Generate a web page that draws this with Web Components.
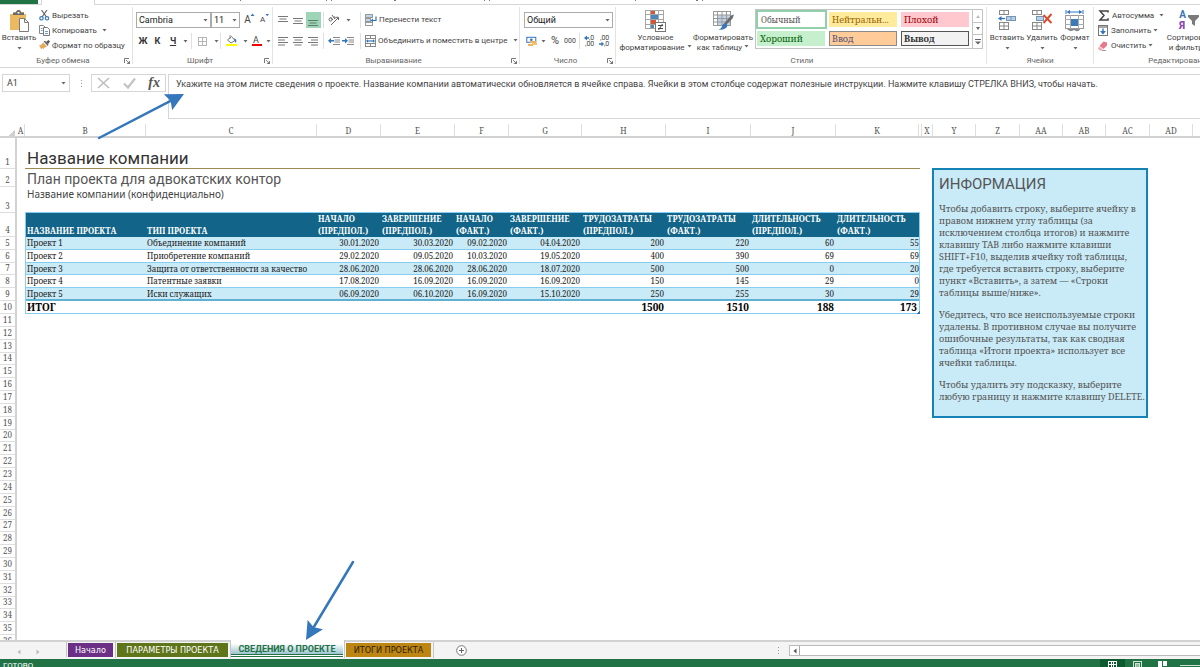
<!DOCTYPE html>
<html lang="ru">
<head>
<meta charset="utf-8">
<title>План проекта — сведения о проекте</title>
<style>
  html, body { margin: 0; height: 100%; overflow: hidden; background: #fff; }
  body {
    --ui: Roboto, "Open Sans", sans-serif;
    --book: "Noto Serif", "DejaVu Serif Condensed", serif;
    --line: #d6d6d6;
    font: 8px/10px var(--ui);
    color: #444;
  }
</style>
</head>
<body>
<xl-app></xl-app>

<script>
const rect = (x, y, w, h, f, s) => `<rect x="${x}" y="${y}" width="${w}" height="${h}" fill="${f || 'none'}"${s ? ` stroke="${s}"` : ''}/>`;
const line = (d, c, w) => `<path d="${d}" fill="none" stroke="${c || '#777'}" stroke-width="${w || 1}"/>`;
const fill = (d, c) => `<path d="${d}" fill="${c || '#666'}"/>`;

/* name: [width, height, drawing] */
const ICONS = {
  caret: [5, 3, fill('M.5 0h4L2.500 2.500z', '#666')],
  paste: [20, 22, fill('M1 4h4V2h3a2 2 0 0 1 4 0h3v2h2v5h-6v11H1z', '#eab960') + fill('M4 5V2.500h3a2 2 0 0 1 5 0h3V5z', '#6a6a6a') + fill('M8.500 2h2v1.500h-2z', '#fff') + '<path d="M10.500 8.500h5l4 4v9h-9z" fill="#fff" stroke="#7b7b7b"/><path d="M15.500 8.500v4h4" fill="none" stroke="#7b7b7b"/>'],
  cut: [11, 11, line('M2.500 0L7.500 7M8 0L3 7', '#666', 1.2) + '<circle cx="2.500" cy="8.300" r="1.700" fill="none" stroke="#3d7ab5" stroke-width="1.200"/><circle cx="8" cy="8.300" r="1.700" fill="none" stroke="#3d7ab5" stroke-width="1.200"/>'],
  copy: [11, 11, '<path d="M.5.5h4l2 2v6h-6z" fill="#fff" stroke="#888"/><path d="M4.500 2.500h4l2 2v6h-6z" fill="#fff" stroke="#777"/>' + line('M6 6.500h3M6 8.500h3M2 3.500h1.500M2 5.500h1.500', '#4a86bd', .8)],
  brush: [11, 11, fill('M7 2l2.500-2L11 1.500 9 4z', '#555') + fill('M4.500 1.500L6 .8 9.500 4.500 8.800 6z', '#666') + fill('M4 2.500L8 6.500C6 7 5 8 4.500 9L3 8 2.500 9.500 0 5.500 2 5z', '#e8a85a')],
  launch: [6, 6, line('M.5 5V.5H5', '#777') + line('M2 2l2.500 2.500', '#777', .9) + fill('M6 2.500V6H2.500z', '#777')],
  grow: [11, 11, fill('M6.500 3l2-2.500L10.500 3z', '#3a76b8')],
  shrink: [11, 11, fill('M6.500 1H10L8.200 3.200z', '#3a76b8')],
  borders: [9, 9, rect(.5, .5, 8, 8, '', '#b5b5b5') + line('M4.500 0v9M0 4.500h9', '#b5b5b5')],
  bucket: [11, 12, '<path d="M1.500 5L5.500 1.500 9 5.500 5 8z" fill="#fff" stroke="#777"/>' + line('M4 0v4', '#777', .8) + fill('M8 3.500c2 0 3 1.500 2 4.500L8.500 6z', '#3a76b8') + rect(0, 9, 11, 2, '#ffff00')],
  fontcolor: [10, 12, rect(0, 9, 10, 2, '#f30000')],
  top: [11, 13, line('M0 2.500h10M1.500 5h7M0 7.500h10')],
  middle: [11, 13, line('M0 4.500h10M1.500 7h7M0 9.500h10')],
  bottom: [11, 13, line('M0 6.500h10M1.500 9h7M0 11.500h10', '#5b7d6a')],
  left: [11, 9, line('M0 .5h10M0 3h7M0 5.500h10M0 8h7')],
  center: [11, 9, line('M0 .5h10M1.500 3h7M0 5.500h10M1.500 8h7')],
  right: [11, 9, line('M0 .5h10M3 3h7M0 5.500h10M3 8h7')],
  orient: [12, 12, line('M3 11L10.500 3.500M10.500 6V3.300H8', '#666') + '<circle cx="2.500" cy="5.500" r="1.500" fill="none" stroke="#666"/>' + line('M2.500 3L5 6M4 1l3 4M5.500 3.500c1-1.500 2.500-.5 1.500 1', '#666')],
  outdent: [12, 8, line('M5 .5h7M6.500 3h5.500M6.500 5h5.500M5 7.500h7', '#888') + fill('M0 3.700L3 1v2h3v1.500H3v2z', '#2f75bd')],
  indent: [12, 8, line('M5 .5h7M6.500 3h5.500M6.500 5h5.500M5 7.500h7', '#888') + fill('M6 3.700L3 1v2H0v1.500h3v2z', '#2f75bd')],
  wrap: [12, 12, rect(.5, .5, 7, 3, '#bcd6ee', '#999') + rect(.5, 4.500, 5, 3, '#bcd6ee', '#999') + rect(.5, 8.500, 7, 3, '#fff', '#999') + line('M11 2.500v4H7.500', '#2f75bd', 1.2) + fill('M5.500 6.500L8 4.500v4z', '#2f75bd')],
  merge: [11, 12, rect(.5, .5, 10, 11, '#fff', '#888') + line('M0 3.500h11M0 8.500h11M5.500 0v3M5.500 9v3', '#888') + line('M2.500 6h6', '#2f75bd', 1.2) + fill('M1 6l2-1.800v3.600zM10 6L8 4.200v3.600z', '#2f75bd')],
  money: [11, 11, rect(.8, 1.300, 9, 5, '#fff', '#2f75bd') + '<circle cx="5.300" cy="3.800" r="1.300" fill="#2f75bd"/>' + rect(4, 5, 6, 2, '#eeb45c') + rect(2, 8, 5, 2, '#eeb45c') + rect(6, 7, 5, 2, '#f0c27c')],
  incdec: [12, 12, fill('M0 3l3-2.500v1.700h2v1.500H3V5.500z', '#2f75bd')],
  decdec: [12, 12, fill('M5 9L2.500 6.500v1.700H0v1.500h2.500V11.500z', '#2f75bd')],
  cond: [21, 22, rect(.5, .5, 18, 18, '#fff', '#a5a5a5') + line('M0 4.500h19M0 9.500h19M0 14.500h19M5.500 0v19M13.500 0v19', '#a5a5a5') + rect(6, 1, 4, 3, '#d9532f') + rect(6, 5, 7, 4, '#4a86bd') + rect(6, 10, 5, 4, '#d9532f') + rect(6, 15, 3, 3, '#4a86bd') + rect(10.500, 12.500, 10, 9, '#fff', '#777') + line('M13 15.500h5M13 18.500h5M17.500 14l-4 6', '#444')],
  fmttable: [21, 22, rect(.5, 1.500, 17, 14, '#fff', '#999') + rect(5, 5, 12, 10, '#bed3e8') + line('M0 5h18M0 8.500h18M0 12h18M4.500 1v15M9 1v15M13.500 1v15', '#999') + fill('M18 5.500l3-1-1.500 4L13 15l-2-1.500z', '#6b6b6b') + fill('M12.500 13.500c2 .5 2.500 2.500 1 4S9 20.500 5.500 19.500c3-.5 3-2.500 4-4.500 1-1.500 2-1.700 3-1.500z', '#3a78b5')],
  insert: [18, 20, rect(1.500, .5, 9, 4, '#fff', '#888') + line('M6 0v5', '#888') + rect(8.500, 6.500, 9, 4, '#b5d0ea', '#7794b0') + line('M13 6v5', '#7794b0') + rect(1.500, 12.500, 9, 7, '#fff', '#888') + line('M6 12v8M1 16h10', '#888') + line('M3 8.500h4', '#2f75bd', 1.3) + fill('M0 8.500L3.500 6v5z', '#2f75bd')],
  remove: [20, 20, rect(.5, .5, 9, 4, '#fff', '#888') + line('M5 0v5', '#888') + rect(4.500, 6.500, 7, 4, '#b5d0ea', '#7794b0') + rect(.5, 12.500, 9, 7, '#fff', '#888') + line('M5 12v8M0 16h10', '#888') + line('M11.500 5l8 8M19.500 4l-8 9', '#dc4b2b', 2)],
  format: [20, 22, line('M1 0v4M18 0v4M3 2h13', '#2f75bd') + fill('M1.500 2L5 0v4zM17.500 2L14 0v4z', '#2f75bd') + rect(.5, 5.500, 18, 13, '#fff', '#999') + line('M0 9.500h19M0 14.500h19M5.500 5v14M13.500 5v14', '#aaa') + rect(6, 9, 7, 7, '#3d7ab5') + fill('M2 19c3 3 5 2 7 1l2 1c2 1 4-1 4-2', '#888')],
  sum: [12, 11, line('M10 2.500V1H2l4 4.500L2 10h8V8.300', '#444', 1.5)],
  filldown: [11, 11, rect(.5, .5, 9, 10, '#fff', '#777') + rect(1, 1, 8, 2, '#a8a8a8') + line('M5 3.500v5', '#2f75bd', 1.4) + fill('M2 6h6L5 9.500z', '#2f75bd')],
  eraser: [11, 10, fill('M5.500.5L9 1.500v3L5.500 8 1.500 5z', '#e8798d') + fill('M1 5.500L5 8.500 3.500 9.500H1.500L0 7.500z', '#f1a9b5') + line('M4 9.500h4', '#999')],
  funnel: [20, 19, fill('M9 5h11v2l-4 4v5l-3-2v-3L9 7z', '#7a7a7a')],
  cancel: [13, 12, line('M1 1l11 10M12 1L1 11', '#bdbdbd', 1.6)],
  enter: [13, 12, line('M1 6.500l4 4L12 1.500', '#c2c2c2', 2.2)],
  dots: [3, 9, rect(1, 1, 1, 1, '#999') + rect(1, 4, 1, 1, '#999') + rect(1, 7, 1, 1, '#999')],
  prev: [4, 6, fill('M3.500.5v5L.5 3z', '#bbb')],
  next: [4, 6, fill('M.5.5v5L3.500 3z', '#bbb')],
  plus: [11, 11, '<circle cx="5.500" cy="5.500" r="4.800" fill="#fff" stroke="#777"/>' + line('M5.500 3v5M3 5.500h5', '#666')],
  scrollleft: [4, 6, fill('M3.500.5v5L.5 3z', '#555')],
  up: [4, 3, fill('M0 3h4L2 0z', '#bbb')],
  down: [4, 3, fill('M0 0h4L2 3z', '#666')],
  more: [6, 6, line('M0 .5h6', '#666') + fill('M0 2.500h6L3 5.500z', '#666')],
  gridview: [9, 7, rect(.5, .5, 8, 8, '', '#fff') + line('M3.500 0v7M5.500 0v7M0 3.500h9', '#fff')],
  pageview: [9, 7, rect(.5, .5, 8, 8, '', '#cfe3d6') + rect(2.500, 2.500, 4, 6, '#8fbda0', '#cfe3d6')],
  breakview: [9, 7, rect(0, 0, 4, 7, '#fff') + rect(5, 0, 4, 5, '#fff')]
};

const define = (name, css, html, after) => {
  const t = document.createElement('template');
  t.innerHTML = `<style>*{box-sizing:border-box}${css}</style>${html}`;
  customElements.define(name, class extends HTMLElement {
    constructor() {
      super();
      this.attachShadow({ mode: 'open' }).append(t.content.cloneNode(true));
    }
    connectedCallback() {
      if (after && !this.ready) { this.ready = true; after(this, this.shadowRoot); }
    }
  });
};

define('xl-icon', ':host{display:block;flex:none}svg{display:block;overflow:hidden}', '<svg aria-hidden="true"></svg>', (el, root) => {
  const [w, h, d] = ICONS[el.getAttribute('name')];
  const svg = root.querySelector('svg');
  svg.setAttribute('width', w);
  svg.setAttribute('height', h);
  svg.innerHTML = d;
});

/* Ribbon group: commands above, caption and launcher below */
define('rb-group', `
  :host{display:flex;flex-direction:column;flex:none;position:relative}
  :host::after{content:"";position:absolute;right:0;top:2px;bottom:3px;width:1px;background:#e3e3e3}
  .body{display:flex;flex:none;height:49px;padding-top:2px}
  footer{display:flex;flex:none;height:13px;align-items:center;color:#666;padding-right:3px}
  span{flex:1;text-align:center;white-space:nowrap}
`, '<div class="body"><slot></slot></div><footer><span></span></footer>', (el, root) => {
  root.querySelector('span').textContent = el.getAttribute('caption');
  if (el.hasAttribute('launcher')) root.querySelector('footer').insertAdjacentHTML('beforeend', '<xl-icon name="launch"></xl-icon>');
});

/* Command: kind = large | small (icon + words) | tool (icon or glyph only) */
define('rb-button', `
  :host{display:block;flex:none}
  button{all:unset;box-sizing:border-box;display:flex;align-items:center;justify-content:center;width:100%;height:100%;white-space:nowrap;gap:2px}
  :host([kind=small]) button{justify-content:flex-start;height:15px}
  :host([kind=small]) .caret{margin-left:3px}
  :host([tight]) .caret{margin-left:0!important}
  :host([kind=large]) button{flex-direction:column;justify-content:flex-start;gap:0}
  :host([kind=large]) .pic{height:26px;padding-top:3px}
  :host([kind=large]) .txt{text-align:center}
  :host([kind=large]) .caret{margin-top:4px}
  .caret.inline{display:inline-block;margin:0 0 2px 2px!important}
  :host([active]) button{background:#9fd5b7}
`, '<button type="button"></button>', (el, root) => {
  const b = root.querySelector('button');
  const icon = el.getAttribute('icon'), label = el.getAttribute('label');
  const large = el.getAttribute('kind') === 'large';
  if (icon) b.insertAdjacentHTML('beforeend', `<span class="pic"><xl-icon name="${icon}"></xl-icon></span>`);
  const words = label ? label.split('|') : [];
  if (words.length) b.insertAdjacentHTML('beforeend', `<span class="txt">${words.join('<br>')}</span>`);
  b.insertAdjacentHTML('beforeend', '<slot></slot>');
  if (el.hasAttribute('drop')) {
    if (large && words.length > 1) b.querySelector('.txt').insertAdjacentHTML('beforeend', '<xl-icon class="caret inline" name="caret"></xl-icon>');
    else b.insertAdjacentHTML('beforeend', '<xl-icon class="caret" name="caret"></xl-icon>');
  }
  if (el.title) b.setAttribute('aria-label', el.title);
});

define('rb-select', `
  :host{display:flex;align-items:center;position:relative;border:1px solid #ababab;height:16px;background:#fff}
  select{all:unset;box-sizing:border-box;flex:1;min-width:0;height:100%;padding-left:2px;font:9px/14px var(--ui);color:#222;white-space:nowrap}
  xl-icon{position:absolute;right:2px;top:6px;pointer-events:none}
`, '<select></select><xl-icon name="caret"></xl-icon>', (el, root) => {
  const s = root.querySelector('select');
  s.setAttribute('aria-label', el.getAttribute('label'));
  s.add(new Option(el.getAttribute('value')));
});

define('xl-tabs', `
  :host{display:flex;height:5px;border-bottom:1px solid var(--line);background:#fff}
  .file{width:38px;height:4px;background:#217346}
  .home{width:54px;height:5px;margin-left:3px;border:1px solid var(--line);border-width:0 1px;background:#fff}
  svg{display:block}
`, `<div class="file"></div><div class="home"></div>
  <svg width="640" height="2" aria-hidden="true"><path d="M145 0h1v1h-1zM231 0h1v1h-1zM236 0h1v1h-1zM299 0h2v1h-2zM389 0h1v1h-1zM394 0h1v1h-1zM540 0h1v1h-1zM601 0h2v1h-2zM607 0h1v1h-1z" fill="#777"/></svg>`);

define('xl-gallery', `
  :host{display:flex;border:1px solid #c3c3c3;height:40px;background:#fff}
  .cells{display:grid;grid-template-columns:72px 72px 72px;grid-template-rows:19px 19px}
  button{all:unset;box-sizing:border-box;margin:2px 3px 2px 1px;padding-left:3px;font:9px/15px var(--book);white-space:nowrap;overflow:hidden;border:0 solid transparent}
  .normal{font-size:8px;margin:0 1px 0 0;border:2px solid #92cfad;color:#555}
  .neutral{background:#ffeb9c;color:#9c6500}
  .bad{background:#ffc7ce;color:#9c0006}
  .good{background:#c6efce;color:#006100}
  .input{background:#ffcc99;color:#4f4f76;border:1px solid #8a8a8a;line-height:13px;padding-left:2px}
  .output{background:#f2f2f2;color:#333;border:1px solid #555;line-height:13px;padding-left:2px;font-weight:bold}
  .scroll{display:grid;grid-template-rows:13px 12px 13px;width:10px;border-left:1px solid #c3c3c3}
  .scroll button{margin:0;padding:0;display:grid;place-items:center;border-bottom:1px solid #c3c3c3}
  .scroll button:last-child{border-bottom:0}
`, `<div class="cells">
    <button class="normal">Обычный</button><button class="neutral">Нейтральн...</button><button class="bad">Плохой</button>
    <button class="good">Хороший</button><button class="input">Ввод</button><button class="output">Вывод</button>
  </div>
  <div class="scroll">
    <button aria-label="Вверх"><xl-icon name="up"></xl-icon></button>
    <button aria-label="Вниз"><xl-icon name="down"></xl-icon></button>
    <button aria-label="Дополнительно"><xl-icon name="more"></xl-icon></button>
  </div>`);

define('xl-ribbon', `
  :host{display:flex;height:63px;overflow:hidden;border-bottom:1px solid var(--line);background:#fff}
  .stack{display:flex;flex-direction:column;padding-top:1px}
  .rows{display:grid;grid-template-rows:16px 16px;row-gap:5px;padding-top:5px;align-content:start}
  .row{display:flex;align-items:stretch}
  hr{border:0;width:1px;margin:0;background:#e0e0e0}
  .glyph{font:bold 9px/12px var(--ui);color:#333}
  .over{position:absolute;font:9px/9px var(--ui);color:#444}
  .digits{left:5px;top:2px;font:7px/6px var(--ui);text-align:right}
  .digits.near{left:0}
  .sort{left:15px;top:2px;font:bold 10px/11px var(--ui);color:#3a76b8}
  .sort b{color:#8b4bb0}
  .w8{width:8px}.w10{width:10px}.w14{width:14px}.w15{width:15px}.w16{width:16px}.w20{width:20px}
  .gap2{margin-left:2px}.gap3{margin-left:3px}
  .wide{margin:0 4px 0 8px}
  .clip{width:133px;padding-left:2px}.font{width:140px;padding-left:3px}.align{width:247px;padding-left:3px}
  .num{width:96px;padding-left:4px}.styles{width:371px;padding-left:4px}.cells{width:107px;padding-left:2px}.edit{width:170px;padding-left:4px}
  .rel{position:relative}
`, `
<rb-group class="clip" caption="Буфер обмена" launcher>
  <rb-button kind="large" icon="paste" label="Вставить" drop style="width:34px"></rb-button>
  <div class="stack gap3">
    <rb-button kind="small" icon="cut" label="Вырезать"></rb-button>
    <rb-button kind="small" icon="copy" label="Копировать" drop></rb-button>
    <rb-button kind="small" icon="brush" label="Формат по образцу"></rb-button>
  </div>
</rb-group>
<rb-group class="font" caption="Шрифт" launcher>
  <div class="rows">
    <div class="row">
      <rb-select label="Шрифт" value="Cambria" style="width:75px"></rb-select>
      <rb-select label="Размер" value="11" style="width:29px"></rb-select>
      <rb-button class="w15 rel" title="Увеличить размер"><span style="font-size:10px">A</span><xl-icon name="grow" class="over" style="right:0;top:1px"></xl-icon></rb-button>
      <rb-button class="w15 rel" title="Уменьшить размер"><span>A</span><xl-icon name="shrink" class="over" style="right:0;top:1px"></xl-icon></rb-button>
    </div>
    <div class="row">
      <rb-button class="w14"><span class="glyph">Ж</span></rb-button>
      <rb-button class="w15"><i class="glyph">К</i></rb-button>
      <rb-button class="w16"><u class="glyph">Ч</u></rb-button>
      <rb-button class="w8" icon="caret" title="Подчёркивание"></rb-button>
      <hr class="gap2">
      <rb-button class="w20" icon="borders" title="Границы"></rb-button>
      <rb-button class="w8" icon="caret" title="Виды границ"></rb-button>
      <hr>
      <rb-button class="w20" icon="bucket" title="Цвет заливки"></rb-button>
      <rb-button class="w8" icon="caret" title="Выбор заливки"></rb-button>
      <rb-button class="w15 rel" icon="fontcolor" title="Цвет текста"><span class="over" style="left:4px;top:3px">A</span></rb-button>
      <rb-button class="w8" icon="caret" title="Выбор цвета"></rb-button>
    </div>
  </div>
</rb-group>
<rb-group class="align" caption="Выравнивание" launcher>
  <div class="rows">
    <div class="row">
      <rb-button class="w15" icon="top" title="По верхнему краю"></rb-button>
      <rb-button class="w15" icon="middle" title="Посередине"></rb-button>
      <rb-button class="w15" icon="bottom" active title="По нижнему краю"></rb-button>
      <hr class="gap2">
      <rb-button class="w20" icon="orient" title="Ориентация"></rb-button>
      <rb-button class="w8" icon="caret" title="Виды ориентации"></rb-button>
      <hr class="wide">
      <rb-button kind="small" icon="wrap" label="Перенести текст"></rb-button>
    </div>
    <div class="row">
      <rb-button class="w15" icon="left" title="По левому краю"></rb-button>
      <rb-button class="w15" icon="center" title="По центру"></rb-button>
      <rb-button class="w15" icon="right" title="По правому краю"></rb-button>
      <hr class="gap2">
      <rb-button class="w20" icon="outdent" title="Уменьшить отступ"></rb-button>
      <rb-button class="w8" icon="indent" title="Увеличить отступ"></rb-button>
      <hr class="wide">
      <rb-button kind="small" icon="merge" label="Объединить и поместить в центре" drop></rb-button>
    </div>
  </div>
</rb-group>
<rb-group class="num" caption="Число" launcher>
  <div class="rows">
    <div class="row"><rb-select label="Числовой формат" value="Общий" style="width:89px"></rb-select></div>
    <div class="row">
      <rb-button class="w15" icon="money" title="Финансовый формат"></rb-button>
      <rb-button class="w8" icon="caret" title="Виды валют"></rb-button>
      <rb-button class="w16"><span style="font-size:11px">%</span></rb-button>
      <rb-button class="w14"><span style="font-size:7px">000</span></rb-button>
      <hr class="gap2">
      <rb-button class="w20 rel" icon="incdec" title="Увеличить разрядность"><span class="over digits">,0<br>,00</span></rb-button>
      <rb-button class="w10 rel" icon="decdec" title="Уменьшить разрядность"><span class="over digits near">,00<br>,0</span></rb-button>
    </div>
  </div>
</rb-group>
<rb-group class="styles" caption="Стили">
  <rb-button kind="large" icon="cond" label="Условное|форматирование" drop style="width:71px"></rb-button>
  <rb-button kind="large" icon="fmttable" label="Форматировать|как таблицу" drop style="width:64px"></rb-button>
  <xl-gallery style="margin-top:2px"></xl-gallery>
</rb-group>
<rb-group class="cells" caption="Ячейки">
  <rb-button kind="large" icon="insert" label="Вставить" drop style="width:36px"></rb-button>
  <rb-button kind="large" icon="remove" label="Удалить" drop style="width:34px"></rb-button>
  <rb-button kind="large" icon="format" label="Формат" drop style="width:32px"></rb-button>
</rb-group>
<rb-group class="edit" caption="Редактирование">
  <div class="stack">
    <rb-button kind="small" icon="sum" label="Автосумма" drop></rb-button>
    <rb-button kind="small" icon="filldown" label="Заполнить" drop tight></rb-button>
    <rb-button kind="small" icon="eraser" label="Очистить" drop tight></rb-button>
  </div>
  <rb-button class="rel" kind="large" icon="funnel" label="Сортировка|и фильтр" drop style="width:50px"><span class="over sort">А<br><b>Я</b></span></rb-button>
</rb-group>
`);

define('xl-formula', `
  :host{display:flex;align-items:flex-start;padding:6px 0 6px 2px;height:56px;color:#444}
  .name{width:68px;flex:none;display:flex;align-items:center;border:1px solid var(--line);height:18px;padding:0 3px 0 4px}
  input{all:unset;flex:1;min-width:0;font:9px/16px var(--ui)}
  .dots{padding:5px 8px 0 10px}
  .keys{width:75px;flex:none;display:flex;align-items:center;justify-content:space-between;border:1px solid var(--line);height:18px;padding:0 5px}
  .keys button{all:unset}
  .keys .fx{font:italic bold 14px/16px "Liberation Serif",serif;color:#555}
  textarea{all:unset;box-sizing:border-box;flex:1;min-width:0;height:45px;margin-left:2px;border:1px solid var(--line);border-right:0;padding:1px 0 0 7px;font:9px/16px var(--ui);white-space:nowrap;overflow:hidden}
`, `<div class="name"><input aria-label="Имя ячейки" value="A1"><xl-icon name="caret"></xl-icon></div>
  <div class="dots"><xl-icon name="dots"></xl-icon></div>
  <div class="keys"><button aria-label="Отмена"><xl-icon name="cancel"></xl-icon></button><button aria-label="Ввод"><xl-icon name="enter"></xl-icon></button><button class="fx">fx</button></div>
  <textarea aria-label="Строка формул">Укажите на этом листе сведения о проекте. Название компании автоматически обновляется в ячейке справа. Ячейки в этом столбце содержат полезные инструкции. Нажмите клавишу СТРЕЛКА ВНИЗ, чтобы начать.</textarea>`);

define('xl-columns', `
  :host{display:grid;grid-template-columns:17px 8px 121px 171px 64px 74px 54px 73px 84px 85px 85px 83px 3px 11px 43px 44px 43px 43px 44px 43px 1fr;height:14px;border-bottom:2px solid #d2d2d2;font:8px/14px var(--book);color:#555;overflow:hidden}
  span{border-right:1px solid #dedede;text-align:center;white-space:nowrap}
  span:nth-child(2){border:0}
  span:last-child{border:0}
  .corner{display:flex;align-items:flex-end;justify-content:flex-end;padding:0 2px 2px 0}
  i{width:7px;height:7px;background:linear-gradient(135deg,transparent 50%,#d0d0d0 50%)}
`, '', (el, root) => {
  root.append(Object.assign(document.createElement('span'), { className: 'corner', innerHTML: '<i></i>' }));
  for (const c of ['A', 'B', 'C', 'D', 'E', 'F', 'G', 'H', 'I', 'J', 'K', '', 'X', 'Y', 'Z', 'AA', 'AB', 'AC', 'AD', ''])
    root.append(Object.assign(document.createElement('span'), { textContent: c }));
});

define('xl-gutter', `
  :host{display:block;border-right:2px solid #d2d2d2;font:8px/10px var(--book);color:#555;text-align:center}
  .head{display:grid;grid-template-rows:31px 18px 26px 24px 13px 13px 12px 13px 13px 13px}
  .rest{display:grid;grid-auto-rows:1fr;height:334px}
  span{display:flex;align-items:flex-end;justify-content:center;border-bottom:1px solid #dedede;padding-bottom:1px}
`, '<div class="head"></div><div class="rest"></div>', (el, root) => {
  for (let n = 1; n <= 36; n++)
    root.querySelector(n > 10 ? '.rest' : '.head').append(Object.assign(document.createElement('span'), { textContent: n }));
});

const PROJECTS = [
  ['Проект 1', 'Объединение компаний', '30.01.2020', '30.03.2020', '09.02.2020', '04.04.2020', 200, 220, 60, 55],
  ['Проект 2', 'Приобретение компаний', '29.02.2020', '09.05.2020', '10.03.2020', '19.05.2020', 400, 390, 69, 69],
  ['Проект 3', 'Защита от ответственности за качество', '28.06.2020', '28.06.2020', '28.06.2020', '18.07.2020', 500, 500, 0, 20],
  ['Проект 4', 'Патентные заявки', '17.08.2020', '16.09.2020', '16.09.2020', '16.09.2020', 150, 145, 29, 0],
  ['Проект 5', 'Иски служащих', '06.09.2020', '06.10.2020', '16.09.2020', '15.10.2020', 250, 255, 30, 29]
];
const HEADS = ['НАЗВАНИЕ ПРОЕКТА', 'ТИП ПРОЕКТА', 'НАЧАЛО|(ПРЕДПОЛ.)', 'ЗАВЕРШЕНИЕ|(ПРЕДПОЛ.)', 'НАЧАЛО|(ФАКТ.)', 'ЗАВЕРШЕНИЕ|(ФАКТ.)', 'ТРУДОЗАТРАТЫ|(ПРЕДПОЛ.)', 'ТРУДОЗАТРАТЫ|(ФАКТ.)', 'ДЛИТЕЛЬНОСТЬ|(ПРЕДПОЛ.)', 'ДЛИТЕЛЬНОСТЬ|(ФАКТ.)'];

define('project-table', `
  :host{display:block;position:relative;width:895px}
  table{table-layout:fixed;width:100%;border-collapse:separate;border-spacing:0;border:1px solid #86cdef;border-top:0;border-bottom:0;font:8px/11px var(--book);color:#222}
  th,td{padding:0 2px 0 1px;text-align:right;white-space:nowrap;vertical-align:bottom}
  td:last-child{padding-right:0}
  th{height:25px;background:#126488;color:#fff;text-align:left;line-height:12px;border-top:1px solid #86cdef}
  td{height:13px;line-height:12px;border-bottom:1px solid #86cdef}
  td:nth-child(-n+2){text-align:left}
  tbody tr:nth-child(odd) td{background:#c9eaf7}
  tbody tr:nth-child(3) td{height:12px;line-height:11px}
  tbody tr:last-child td{border-bottom:2px solid #5fb0d3;line-height:11px}
  tfoot td{font-size:10px;font-weight:bold;color:#000}
  tfoot td:last-child{padding-right:2px}
  i{position:absolute;right:0;bottom:0;width:3px;height:3px;background:linear-gradient(135deg,transparent 40%,#2f6fb5 40%)}
`, `<table><colgroup></colgroup><thead><tr></tr></thead><tbody></tbody><tfoot></tfoot></table><i></i>`, (el, root) => {
  const row = a => '<tr>' + a.map(v => `<td>${v}</td>`).join('') + '</tr>';
  root.querySelector('colgroup').innerHTML = [120, 171, 64, 74, 54, 73, 84, 85, 85, 83].map(w => `<col style="width:${w}px">`).join('');
  root.querySelector('thead tr').innerHTML = HEADS.map(h => `<th scope="col">${h.replace('|', '<br>')}</th>`).join('');
  root.querySelector('tbody').innerHTML = PROJECTS.map(row).join('');
  root.querySelector('tfoot').innerHTML = row(['ИТОГ', '', '', '', '', '', 1500, 1510, 188, 173]);
});

define('info-note', `
  :host{display:block;width:216px;height:250px;box-sizing:border-box;border:2px solid #1583b5;background:#c9eaf7;padding:4px 2px 4px 5px;font:9px/12px var(--book);color:#555;white-space:nowrap}
  h2{margin:0 0 9px;font:15px/20px var(--ui);color:#555}
  p{margin:0 0 10px}
`, `<h2>ИНФОРМАЦИЯ</h2>
  <p>Чтобы добавить строку, выберите ячейку в<br>правом нижнем углу таблицы (за<br>исключением столбца итогов) и нажмите<br>клавишу TAB либо нажмите клавиши<br>SHIFT+F10, выделив ячейку той таблицы,<br>где требуется вставить строку, выберите<br>пункт «Вставить», а затем — «Строки<br>таблицы выше/ниже».</p>
  <p>Убедитесь, что все неиспользуемые строки<br>удалены. В противном случае вы получите<br>ошибочные результаты, так как сводная<br>таблица «Итоги проекта» использует все<br>ячейки таблицы.</p>
  <p>Чтобы удалить эту подсказку, выберите<br>любую границу и нажмите клавишу DELETE.</p>`);

define('xl-sheet', `
  :host{display:grid;grid-template-columns:17px 1fr;min-height:0;overflow:hidden}
  main{position:relative;padding-left:8px}
  h1{margin:0;width:895px;height:31px;padding:10px 0 0 2px;border-bottom:1px solid #9c8b50;font:17px/20px var(--ui);color:#333}
  h2{margin:0;padding:1px 0 0 2px;font:14px/18px var(--ui);color:#555}
  p{margin:0 0 12px;padding-left:2px;font:10px/12px "Noto Sans",sans-serif;color:#444}
  info-note{position:absolute;left:915px;top:30px}
`, `<xl-gutter></xl-gutter>
  <main>
    <h1>Название компании</h1>
    <h2>План проекта для адвокатских контор</h2>
    <p>Название компании (конфиденциально)</p>
    <project-table></project-table>
    <info-note></info-note>
  </main>`);

define('sheet-tabs', `
  :host{display:flex;height:19px;border-top:2px solid #d2d2d2;background:#f4f4f4;align-items:flex-start}
  nav{display:flex;width:67px;height:15px;padding:5px 0 0 17px;gap:15px;border-right:1px solid #c5c5c5}
  button{all:unset}
  .tab{box-sizing:border-box;height:16px;border-right:1px solid #c5c5c5;padding:1px 2px 1px 1px}
  .tab button{box-sizing:border-box;display:block;height:14px;width:100%;text-align:center;font:9px/14px "DejaVu Sans Condensed",sans-serif;color:#fff;white-space:nowrap}
  .a{width:49px}.a button{background:#6b2f85}
  .b{width:115px}.b button{background:#5f7519}
  .c{width:114px;margin-top:-2px;height:18px;padding:0 1px 0 0;background:#fff}
  .c button{height:15px;font:bold 9px/19px var(--ui);color:#1f7246;background:linear-gradient(#fff 25%,#9cc4d1);border-bottom:1px solid #217346;box-shadow:0 1px #fff,0 2px #217346}
  .d{width:89px}.d button{background:#bd8512;color:#2d1d00}
  .add{margin:3px 0 0 22px}
  .grip{margin:4px 0 0 auto}
  .bar{display:flex;width:calc(34% + 3px);margin:3px 0 0 9px;height:11px;border:1px solid #bbb;border-right:0;background:#fff}
  .bar button{box-sizing:border-box;width:10px;border-right:1px solid #aaa;display:grid;place-items:center}
`, `<nav><button aria-label="Назад"><xl-icon name="prev"></xl-icon></button><button aria-label="Вперёд"><xl-icon name="next"></xl-icon></button></nav>
  <div class="tab a"><button>Начало</button></div>
  <div class="tab b"><button>ПАРАМЕТРЫ ПРОЕКТА</button></div>
  <div class="tab c"><button>СВЕДЕНИЯ О ПРОЕКТЕ</button></div>
  <div class="tab d"><button>ИТОГИ ПРОЕКТА</button></div>
  <button class="add" aria-label="Новый лист"><xl-icon name="plus"></xl-icon></button>
  <xl-icon class="grip" name="dots"></xl-icon>
  <div class="bar"><button aria-label="Прокрутка влево"><xl-icon name="scrollleft"></xl-icon></button></div>`);

define('xl-status', `
  :host{display:flex;height:8px;overflow:hidden;background:#217346;color:#fff;padding-left:3px}
  span{font:8px/8px var(--ui);margin-top:3px;flex:1}
  button{all:unset;box-sizing:border-box;width:25px;height:8px;padding:2px 0 0 8px}
  .on{background:#0e5a30}
  i{width:20px;height:1px;margin:6px 0 0 5px;background:#cfe3d6}
`, `<span>ГОТОВО</span>
  <button class="on" aria-label="Обычный"><xl-icon name="gridview"></xl-icon></button>
  <button aria-label="Разметка страницы"><xl-icon name="pageview"></xl-icon></button>
  <button aria-label="Страничный режим"><xl-icon name="breakview"></xl-icon></button><i></i>`);

/* Annotation arrow drawn over the workbook */
define('pointer-arrow', ':host{position:absolute;pointer-events:none}svg{display:block;overflow:visible}', '<svg aria-hidden="true"></svg>', (el, root) => {
  const [x1, y1, x2, y2] = el.getAttribute('path').split(' ').map(Number);
  const len = Math.hypot(x2 - x1, y2 - y1), ux = (x2 - x1) / len, uy = (y2 - y1) / len;
  const at = (back, side) => `${x2 - ux * back - uy * side} ${y2 - uy * back + ux * side}`;
  const svg = root.querySelector('svg');
  svg.setAttribute('width', Math.max(x1, x2));
  svg.setAttribute('height', Math.max(y1, y2));
  svg.innerHTML = `<path d="M${x1} ${y1}L${at(14, 0)}" stroke="#3577bb" stroke-width="2.500" stroke-linecap="round"/><path d="M${at(0, 0)}L${at(18, 9)}L${at(15, 0)}L${at(18, -9)}z" fill="#3577bb"/>`;
});

define('xl-app', `
  :host{display:grid;grid-template-columns:minmax(0,1fr);grid-template-rows:auto auto auto auto minmax(0,1fr) auto auto;height:100vh;position:relative;overflow:hidden}
  .a1{left:99px;top:94px}
  .a2{left:305px;bottom:27px}
`, `<xl-tabs></xl-tabs><xl-ribbon></xl-ribbon><xl-formula></xl-formula><xl-columns></xl-columns><xl-sheet></xl-sheet><sheet-tabs></sheet-tabs><xl-status></xl-status>
  <pointer-arrow class="a1" path="0 44 85 0"></pointer-arrow>
  <pointer-arrow class="a2" path="48 0 1 78"></pointer-arrow>`);
</script>
</body>
</html>
